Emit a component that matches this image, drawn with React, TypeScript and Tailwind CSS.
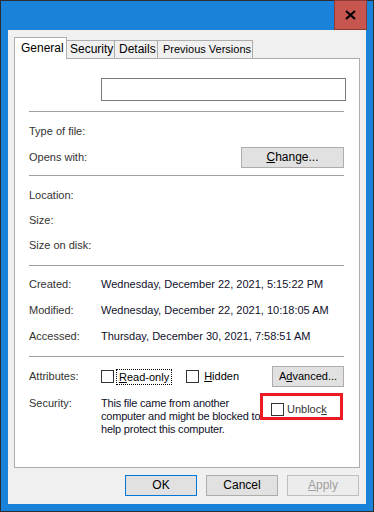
import React from "react";

const font = { fontFamily: '"Liberation Sans", Arial, sans-serif' };

function Separator({ className = "" }: { className?: string }) {
    return <div className={`ml-[14px] mr-[15px] h-px bg-[#a0a0a0] ${className}`} />;
}

function Checkbox() {
    return <span className="inline-block h-[13px] w-[13px] shrink-0 border border-[#333] bg-white" />;
}

function Button({
    children,
    className = "",
    tone = "normal",
}: {
    children: React.ReactNode;
    className?: string;
    tone?: "normal" | "default" | "disabled";
}) {
    const look =
        tone === "default"
            ? "border-[#0078d7] bg-[#e1e1e1] text-black"
            : tone === "disabled"
              ? "border-[#bfbfbf] bg-[#ececec] text-[#a0a0a0]"
              : "border-[#adadad] bg-[#e1e1e1] text-black";
    return (
        <div className={`flex h-[21px] shrink-0 items-center justify-center border text-[12px] ${look} ${className}`}>
            {children}
        </div>
    );
}

function InfoRow({ label, value, h = "h-[26px]" }: { label: string; value?: string; h?: string }) {
    return (
        <div className={`flex ${h} items-center whitespace-nowrap`}>
            <span className="w-[72px] shrink-0 text-[#333]">{label}</span>
            {value && <span className="text-[#10102a]">{value}</span>}
        </div>
    );
}

export default function App() {
    return (
        <div
            className="flex h-[512px] w-[374px] flex-col border border-[#2d2d2d] bg-[#1a82d8] text-[11px] leading-[13px]"
            style={font}
        >
            {/* title bar */}
            <div className="flex h-[29px] shrink-0 justify-end pr-[6px]">
                <div className="-mt-px flex h-[30px] w-[33px] items-center justify-center border border-[#8c3a34] bg-[#c75651]">
                    <svg width="11" height="10" viewBox="0 0 11 10">
                        <path d="M1 1 L10 9 M10 1 L1 9" stroke="#000" strokeWidth="2.2" />
                    </svg>
                </div>
            </div>

            {/* client area */}
            <div className="mx-[7px] flex h-[474px] flex-col bg-[#f0f0f0] px-[6px] pt-[7px]">
                {/* tabs */}
                <div className="relative z-10 flex h-[21px] items-end whitespace-nowrap text-[12px]">
                    <div className="-mb-px flex h-[22px] w-[53px] shrink-0 items-start border border-b-0 border-[#adadad] bg-white pl-[6px] pt-[4px]">
                        General
                    </div>
                    <div className="-ml-px flex h-[18px] w-[49px] shrink-0 items-center border border-b-0 border-[#adadad] bg-[#f0f0f0] pl-[3px]">
                        Security
                    </div>
                    <div className="-ml-px flex h-[18px] w-[44px] shrink-0 items-center border border-b-0 border-[#adadad] bg-[#f0f0f0] pl-[4px]">
                        Details
                    </div>
                    <div className="-ml-px flex h-[18px] w-[96px] shrink-0 items-center border border-b-0 border-[#adadad] bg-[#f0f0f0] pl-[5px] text-[11px]">
                        Previous Versions
                    </div>
                </div>

                {/* panel */}
                <div className="relative flex h-[410px] flex-col border border-[#adadad] bg-white pt-[19px]">
                    <div className="ml-[86px] h-[23px] w-[245px] border border-[#7a7a7a] bg-white" />
                    <Separator className="mt-[10px]" />

                    <div className="mt-[6px] pl-[14px] pr-[15px]">
                        <InfoRow label="Type of file:" />
                        <div className="flex h-[26px] items-center">
                            <span className="flex-1 text-[#333]">Opens with:</span>
                            <Button className="w-[103px]">
                                <span>
                                    <u>C</u>hange...
                                </span>
                            </Button>
                        </div>
                    </div>
                    <Separator className="mt-[5px]" />

                    <div className="mt-[7px] pl-[14px] pr-[15px]">
                        <InfoRow label="Location:" h="h-[25px]" />
                        <InfoRow label="Size:" h="h-[25px]" />
                        <InfoRow label="Size on disk:" h="h-[25px]" />
                    </div>
                    <Separator className="mt-[7px]" />

                    <div className="mt-[5px] pl-[14px] pr-[15px]">
                        <InfoRow label="Created:" value="Wednesday, December 22, 2021, 5:15:22 PM" />
                        <InfoRow label="Modified:" value="Wednesday, December 22, 2021, 10:18:05 AM" />
                        <InfoRow label="Accessed:" value="Thursday, December 30, 2021, 7:58:51 AM" />
                    </div>
                    <Separator className="mt-[7px]" />

                    <div className="mt-[9px] flex h-[21px] items-center whitespace-nowrap pl-[14px] pr-[15px]">
                        <span className="w-[72px] shrink-0 text-[#333]">Attributes:</span>
                        <Checkbox />
                        <span className="ml-[2px] border border-dotted border-black px-[2px] py-px leading-[12px]">
                            <u>R</u>ead-only
                        </span>
                        <span className="ml-[14px] flex">
                            <Checkbox />
                        </span>
                        <span className="ml-[5px]">
                            <u>H</u>idden
                        </span>
                        <div className="flex-1" />
                        <Button className="w-[72px]">
                            <span className="text-[11px]">
                                A<u>d</u>vanced...
                            </span>
                        </Button>
                    </div>

                    <div className="mt-[6px] flex whitespace-nowrap pl-[14px] pr-[15px]">
                        <span className="w-[72px] shrink-0 pt-[4px] text-[#333]">Security:</span>
                        <div className="w-[159px] shrink-0 pt-[4px] tracking-[-0.2px] text-[#10102a]">
                            This file came from another
                            <br />
                            computer and might be blocked to
                            <br />
                            help protect this computer.
                        </div>
                        <div className="flex h-[27px] w-[83px] shrink-0 items-start border-[3px] border-[#ed1c24] pl-[8px] pt-[7px]">
                            <Checkbox />
                            <span className="ml-[3px] text-[#333]">
                                Unbloc<u>k</u>
                            </span>
                        </div>
                    </div>
                </div>

                {/* dialog buttons */}
                <div className="mt-[7px] flex justify-end gap-[9px] pr-[1px]">
                    <Button tone="default" className="w-[72px]">
                        OK
                    </Button>
                    <Button className="w-[72px]">Cancel</Button>
                    <Button tone="disabled" className="w-[72px]">
                        <span>
                            <u>A</u>pply
                        </span>
                    </Button>
                </div>
            </div>
        </div>
    );
}
